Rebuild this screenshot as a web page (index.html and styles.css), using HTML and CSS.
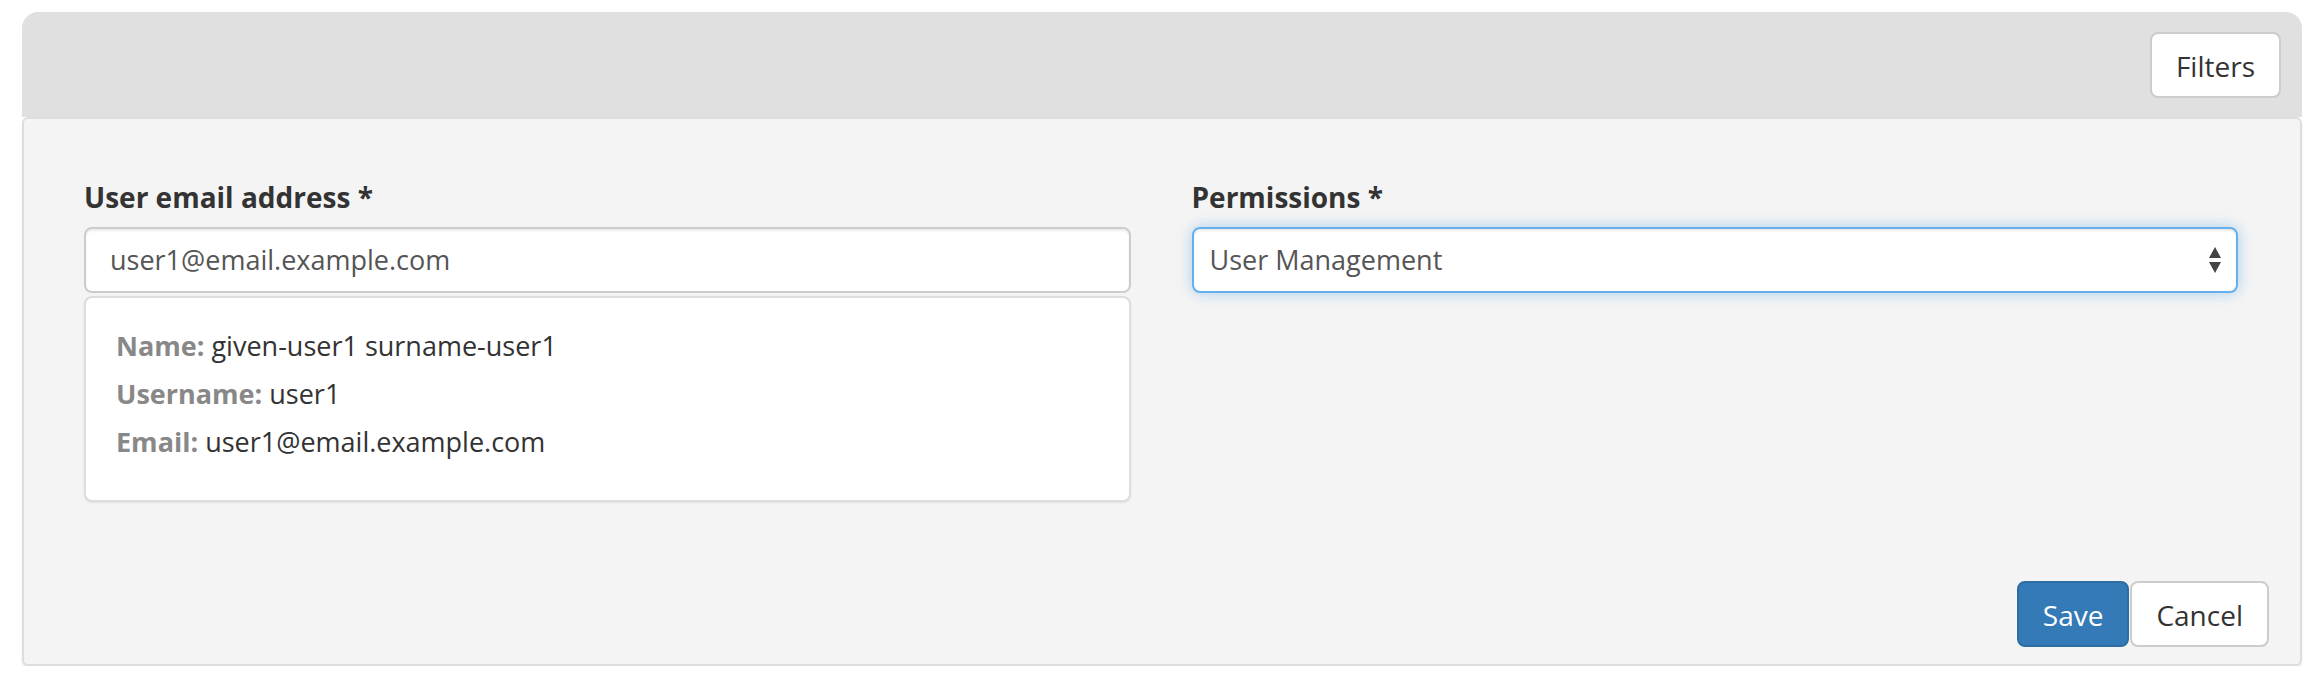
FILE: index.html
```html
<!DOCTYPE html>
<html>
<head>
<meta charset="utf-8">
<link rel="stylesheet" href="styles.css">
</head>
<body>
<div class="panel">
  <div class="panel-header">
    <button class="btn btn-default">Filters</button>
  </div>
  <div class="panel-body">
    <div class="form-row">
      <div class="col">
        <label class="field-label">User email address *</label>
        <div class="input">user1@email.example.com</div>
        <div class="user-card">
          <div class="line"><b>Name:</b> given-user1 surname-user1</div>
          <div class="line"><b>Username:</b> user1</div>
          <div class="line"><b>Email:</b> user1@email.example.com</div>
        </div>
      </div>
      <div class="col">
        <label class="field-label">Permissions *</label>
        <div class="select">
          <span>User Management</span>
          <svg class="arrows" width="12" height="26" viewBox="0 0 12 26"><path d="M6 0 L12 11 L0 11 Z" fill="#444"/><path d="M0 15 L12 15 L6 26 Z" fill="#444"/></svg>
        </div>
      </div>
    </div>
    <div class="footer">
      <button class="btn btn-primary">Save</button>
      <button class="btn btn-default">Cancel</button>
    </div>
  </div>
</div>
</body>
</html>
```

FILE: styles.css
```css
* { box-sizing: border-box; }
html, body { margin: 0; padding: 0; background: #fff; }
body {
  font-family: "Open Sans", "Liberation Sans", sans-serif;
  font-size: 28px;
  line-height: 40px;
  color: #333;
}
.panel {
  margin: 12px 18px 0 22px;
}
.panel-header {
  background: #e0e0e0;
  border-radius: 16px 16px 0 0;
  padding: 20px 21px 19px;
  display: flex;
  justify-content: flex-end;
}
.btn {
  font-family: "Open Sans", "Liberation Sans", sans-serif;
  font-size: 28px;
  line-height: 40px;
  font-weight: 400;
  padding: 12px 24px;
  height: 66px;
  border: 2px solid #ccc;
  border-radius: 8px;
  background: #fff;
  color: #333;
  margin: 0;
}
.btn-primary {
  background: #337ab7;
  border-color: #2e6da4;
  color: #fff;
}
.panel-body {
  background: #f4f4f4;
  border: 2px solid #ddd;
  border-radius: 6px;
  box-shadow: 0 3px 2px rgba(0,0,0,0.08);
  padding: 58px 31px 17px 60px;
}
.form-row {
  display: grid;
  grid-template-columns: 1fr 1fr;
  column-gap: 61px;
  padding-right: 31px;
}
.col { display: flex; flex-direction: column; }
.field-label {
  font-weight: 700;
  margin-bottom: 10px;
  display: block;
}
.input {
  height: 66px;
  border: 2px solid #ccc;
  border-radius: 8px;
  background: #fff;
  box-shadow: inset 0 2px 2px rgba(0,0,0,0.075);
  padding: 11px 24px;
  color: #555;
  font-size: 27px;
}
.user-card {
  margin-top: 3px;
  height: 206px;
  background: #fff;
  border: 2px solid #ddd;
  border-radius: 8px;
  box-shadow: 0 1px 2px rgba(0,0,0,0.08);
  padding: 24px 30px 0;
  font-size: 27px;
}
.user-card .line {
  line-height: 48px;
  color: #333;
}
.user-card b { color: #888; font-weight: 700; }
.select {
  height: 66px;
  border: 2px solid #66afe9;
  border-radius: 8px;
  background: #fff;
  box-shadow: inset 0 2px 2px rgba(0,0,0,0.075), 0 0 14px rgba(102,175,233,0.55);
  padding: 11px 15px 11px 16px;
  color: #555;
  font-size: 27px;
  display: flex;
  align-items: center;
  justify-content: space-between;
}
.arrows { display: block; }
.footer {
  margin-top: 79px;
  display: flex;
  justify-content: flex-end;
  gap: 1px;
}
```
